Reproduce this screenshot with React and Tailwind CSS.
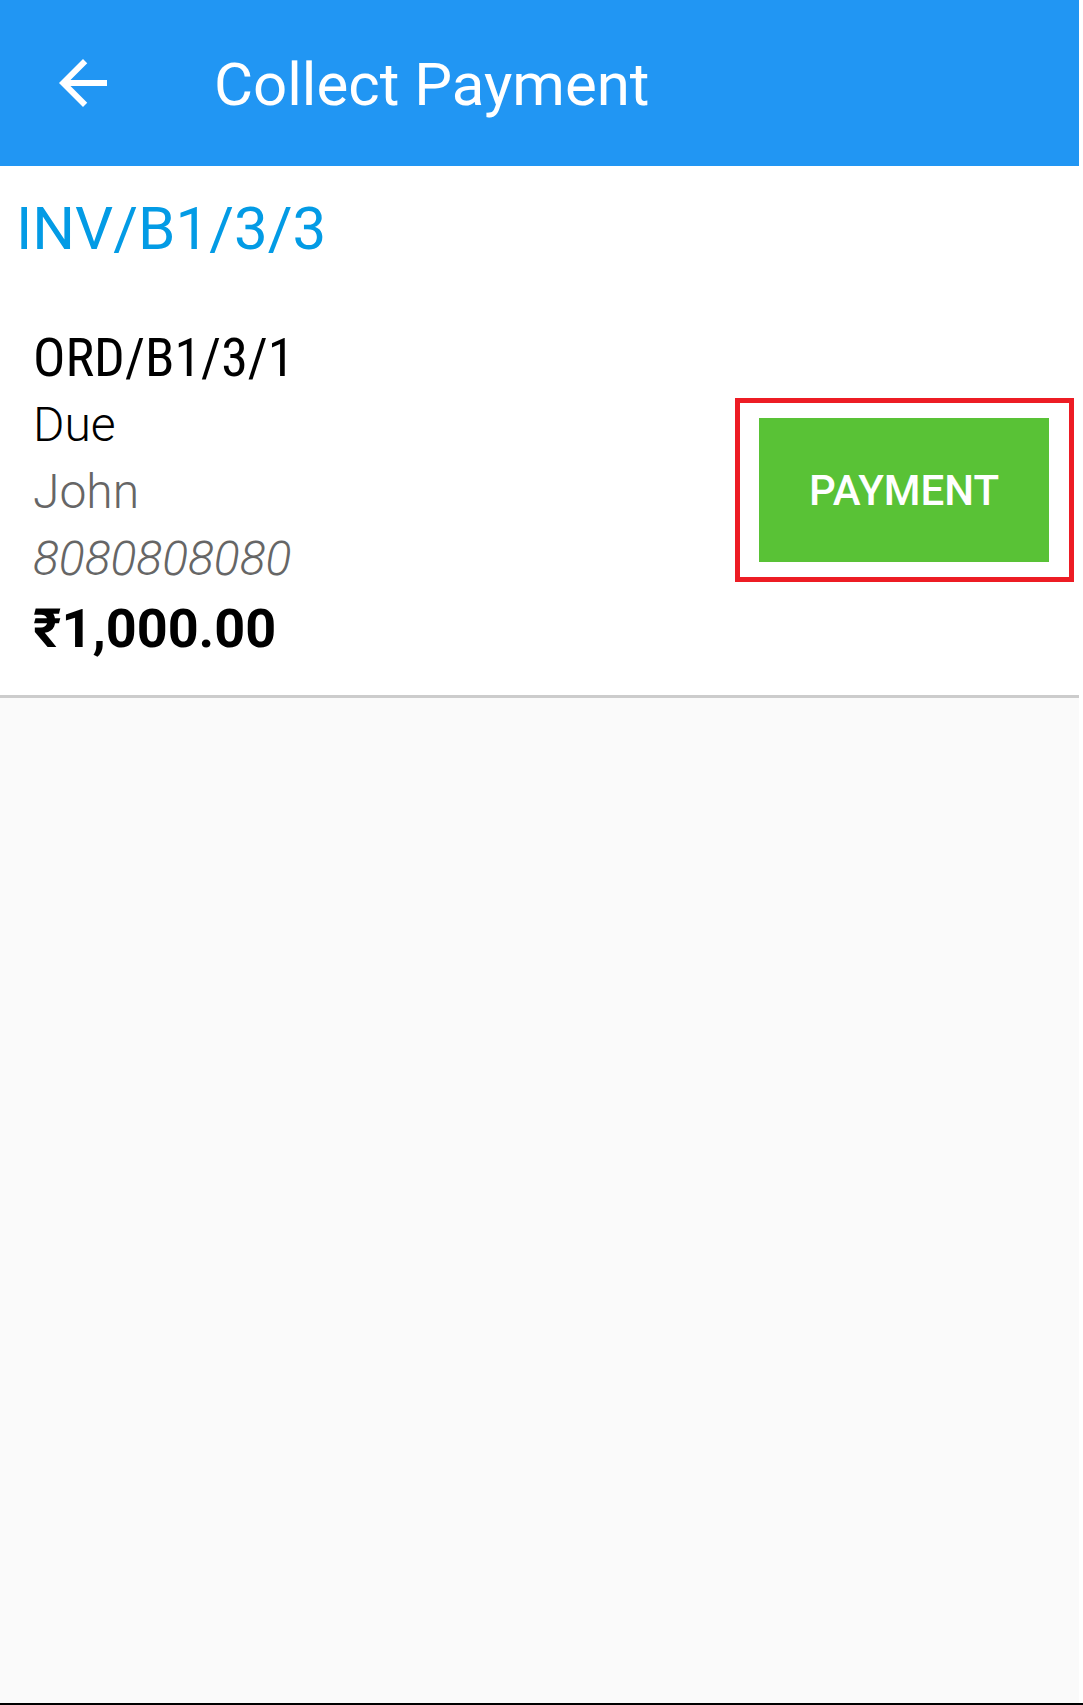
export default function App() {
  return (
    <div className="h-[1705px] flex flex-col bg-white" style={{ fontFamily: "Roboto, 'Noto Sans', sans-serif" }}>
      <div className="w-[1079px] flex-1 flex flex-col">
        {/* toolbar */}
        <div className="h-[166px] bg-[#2196F3] flex items-center shrink-0">
          <svg viewBox="0 0 24 24" className="w-[72px] h-[72px] ml-[47px] mt-[-1px]" fill="#ffffff">
            <path d="M20 11H7.83l5.59-5.59L12 4l-8 8 8 8 1.41-1.41L7.83 13H20v-2z" />
          </svg>
          <div className="ml-[95px] text-[60px] leading-none text-white pt-[4px]">Collect Payment</div>
        </div>

        <div className="pl-[16px] mt-[33px] text-[60px] leading-none text-[#039BE5]">INV/B1/3/3</div>

        {/* invoice row */}
        <div className="flex items-start justify-between mt-[65px] pl-[33px] pr-[5px] pb-[29px] border-b-[3px] border-[#cccccc]">
          <div className="flex flex-col">
            <div className="text-[54px] leading-[67px] text-black" style={{ fontFamily: "'Roboto Condensed', Roboto, sans-serif", fontStretch: "condensed" }}>
              ORD/B1/3/1
            </div>
            <div className="text-[48px] leading-[67px] font-light text-black">Due</div>
            <div className="text-[48px] leading-[67px] font-light text-[#666666]">John</div>
            <div className="text-[48px] leading-[67px] font-light italic text-[#666666]">8080808080</div>
            <div className="text-[54px] leading-[74px] font-bold text-black">₹1,000.00</div>
          </div>
          <div className="mt-[74px] border-[5px] border-[#ED1C24] pl-[19px] pr-[20px] py-[15px]">
            <button
              type="button"
              className="w-[290px] h-[144px] bg-[#59C236] text-white text-[42px] font-medium flex items-center justify-center"
            >
              PAYMENT
            </button>
          </div>
        </div>

        <div className="flex-1 bg-[#FAFAFA]" />
      </div>
      <div className="h-[2px] bg-black shrink-0" />
    </div>
  );
}
